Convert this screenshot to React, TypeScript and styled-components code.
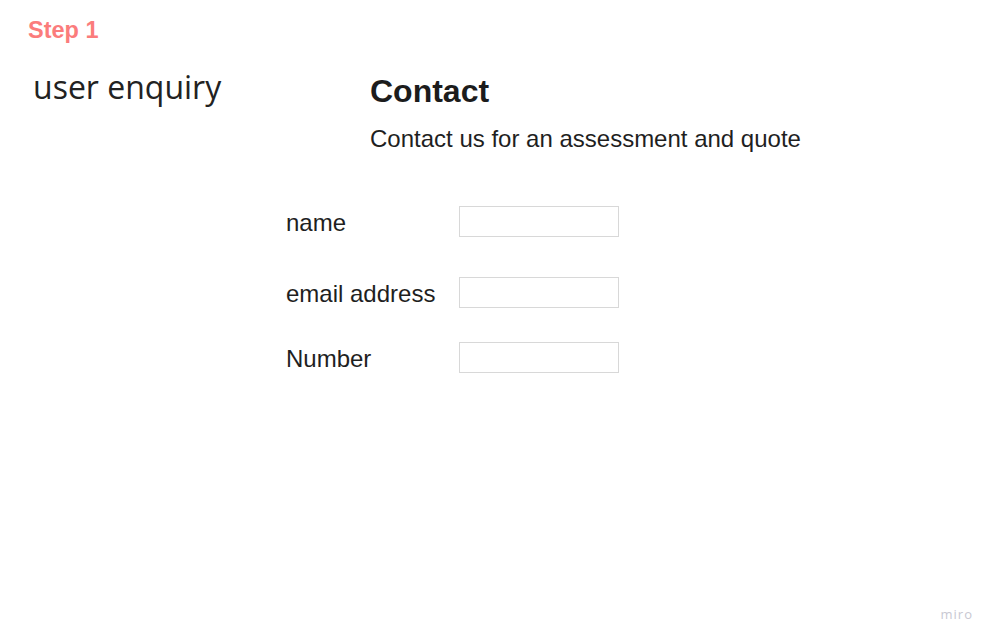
import React from "react";
import styled, { createGlobalStyle } from "styled-components";

const GlobalStyle = createGlobalStyle`
  html, body {
    margin: 0;
    padding: 0;
    background: #ffffff;
  }
  body {
    font-family: "Liberation Sans", Arial, sans-serif;
    color: #1f1f1f;
  }
  * { box-sizing: border-box; }
`;

const Page = styled.div`
  position: relative;
  min-height: 100vh;
  padding: 17px 0 0 28px;
`;

const StepLabel = styled.div`
  font-family: "Liberation Sans", Arial, sans-serif;
  font-weight: 700;
  font-size: 23.5px;
  line-height: 26px;
  color: #fb7c7c;
`;

const Board = styled.div`
  display: grid;
  grid-template-columns: 258px 1fr;
  margin-top: 22px;
`;

const Aside = styled.div`
  padding-left: 5px;
  font-family: "Open Sans", sans-serif;
  font-size: 32px;
  line-height: 44px;
  color: #222222;
`;

const Main = styled.div`
  display: flex;
  flex-direction: column;
  padding-top: 8px;
`;

const Intro = styled.div`
  display: flex;
  flex-direction: column;
  padding-left: 84px;
`;

const Heading = styled.h1`
  margin: 0;
  font-family: "Liberation Sans", Arial, sans-serif;
  font-weight: 700;
  font-size: 32px;
  line-height: 36px;
  color: #1c1c1c;
`;

const Subtitle = styled.p`
  margin: 16px 0 0;
  font-size: 24px;
  line-height: 28px;
  color: #1f1f1f;
`;

const Form = styled.form`
  display: flex;
  flex-direction: column;
  margin-top: 53px;
`;

const Row = styled.label<{ $space: number }>`
  display: flex;
  align-items: center;
  height: 31px;
  margin-top: ${(p) => p.$space}px;
`;

const FieldLabel = styled.span`
  width: 173px;
  font-size: 24px;
  line-height: 31px;
  padding-top: 2px;
  color: #1f1f1f;
`;

const Input = styled.input`
  width: 160px;
  height: 31px;
  margin: 0;
  padding: 0 6px;
  border: 1px solid #d8d8d8;
  border-radius: 0;
  background: #ffffff;
  outline: none;
  font-family: "Liberation Sans", Arial, sans-serif;
  font-size: 16px;
`;

const Watermark = styled.div`
  position: absolute;
  right: 23px;
  bottom: 18px;
  font-family: "Open Sans", sans-serif;
  font-size: 13px;
  line-height: 18px;
  letter-spacing: 1px;
  color: #c8c8d2;
`;

const fields = [
  { label: "name", space: 0 },
  { label: "email address", space: 40 },
  { label: "Number", space: 34 },
];

export default function App() {
  return (
    <>
      <GlobalStyle />
      <Page>
        <StepLabel>Step 1</StepLabel>
        <Board>
          <Aside>user enquiry</Aside>
          <Main>
            <Intro>
              <Heading>Contact</Heading>
              <Subtitle>Contact us for an assessment and quote</Subtitle>
            </Intro>
            <Form onSubmit={(e) => e.preventDefault()}>
              {fields.map((f) => (
                <Row key={f.label} $space={f.space}>
                  <FieldLabel>{f.label}</FieldLabel>
                  <Input type="text" />
                </Row>
              ))}
            </Form>
          </Main>
        </Board>
        <Watermark>miro</Watermark>
      </Page>
    </>
  );
}
